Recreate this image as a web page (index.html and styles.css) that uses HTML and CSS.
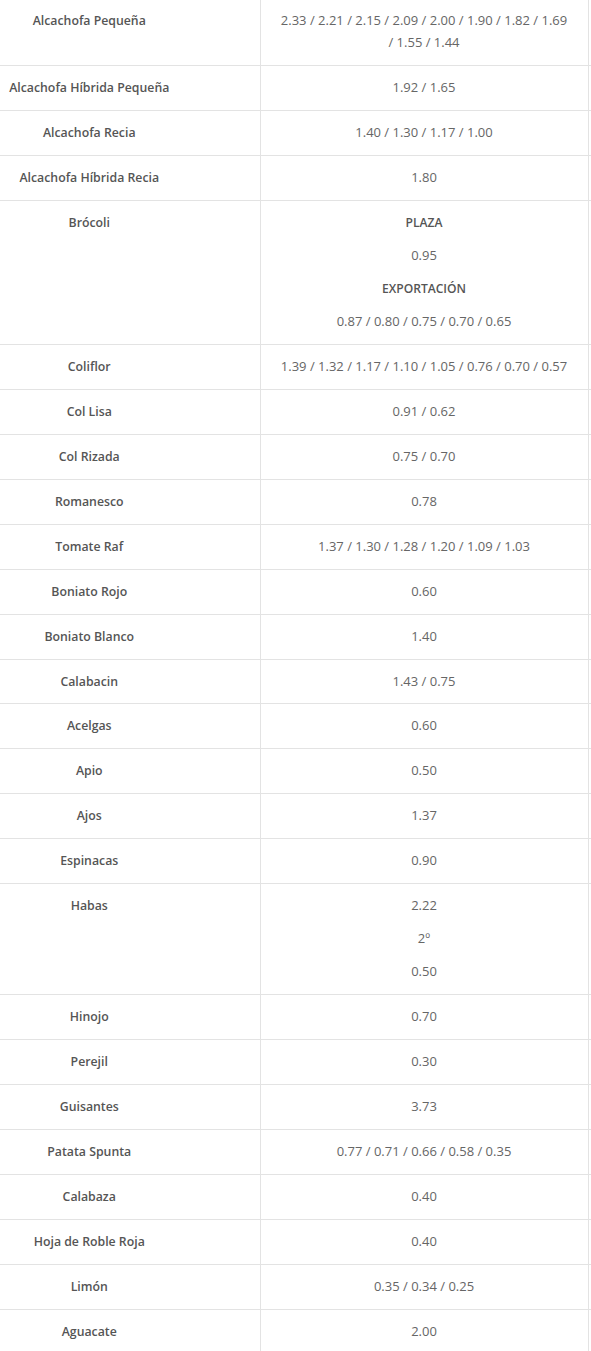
FILE: index.html
```html
<!DOCTYPE html>
<html lang="es">
<head>
<meta charset="utf-8">
<title>Precios</title>
<link rel="stylesheet" href="styles.css">
</head>
<body>
<table class="prices">
<colgroup><col class="c-name"><col class="c-val"><col class="c-extra"></colgroup>
<tbody>
<tr><td class="name">Alcachofa Pequeña</td><td class="val">2.33 / 2.21 / 2.15 / 2.09 / 2.00 / 1.90 / 1.82 / 1.69 / 1.55 / 1.44</td><td class="extra"></td></tr>
<tr><td class="name">Alcachofa Híbrida Pequeña</td><td class="val">1.92 / 1.65</td><td class="extra"></td></tr>
<tr><td class="name">Alcachofa Recia</td><td class="val">1.40 / 1.30 / 1.17 / 1.00</td><td class="extra"></td></tr>
<tr><td class="name">Alcachofa Híbrida Recia</td><td class="val">1.80</td><td class="extra"></td></tr>
<tr><td class="name">Brócoli</td><td class="val"><p class="label">PLAZA</p><p>0.95</p><p class="label">EXPORTACIÓN</p><p>0.87 / 0.80 / 0.75 / 0.70 / 0.65</p></td><td class="extra"></td></tr>
<tr><td class="name">Coliflor</td><td class="val">1.39 / 1.32 / 1.17 / 1.10 / 1.05 / 0.76 / 0.70 / 0.57</td><td class="extra"></td></tr>
<tr><td class="name">Col Lisa</td><td class="val">0.91 / 0.62</td><td class="extra"></td></tr>
<tr><td class="name">Col Rizada</td><td class="val">0.75 / 0.70</td><td class="extra"></td></tr>
<tr><td class="name">Romanesco</td><td class="val">0.78</td><td class="extra"></td></tr>
<tr><td class="name">Tomate Raf</td><td class="val">1.37 / 1.30 / 1.28 / 1.20 / 1.09 / 1.03</td><td class="extra"></td></tr>
<tr><td class="name">Boniato Rojo</td><td class="val">0.60</td><td class="extra"></td></tr>
<tr><td class="name">Boniato Blanco</td><td class="val">1.40</td><td class="extra"></td></tr>
<tr><td class="name">Calabacin</td><td class="val">1.43 / 0.75</td><td class="extra"></td></tr>
<tr><td class="name">Acelgas</td><td class="val">0.60</td><td class="extra"></td></tr>
<tr><td class="name">Apio</td><td class="val">0.50</td><td class="extra"></td></tr>
<tr><td class="name">Ajos</td><td class="val">1.37</td><td class="extra"></td></tr>
<tr><td class="name">Espinacas</td><td class="val">0.90</td><td class="extra"></td></tr>
<tr><td class="name">Habas</td><td class="val"><p>2.22</p><p>2º</p><p>0.50</p></td><td class="extra"></td></tr>
<tr><td class="name">Hinojo</td><td class="val">0.70</td><td class="extra"></td></tr>
<tr><td class="name">Perejil</td><td class="val">0.30</td><td class="extra"></td></tr>
<tr><td class="name">Guisantes</td><td class="val">3.73</td><td class="extra"></td></tr>
<tr><td class="name">Patata Spunta</td><td class="val">0.77 / 0.71 / 0.66 / 0.58 / 0.35</td><td class="extra"></td></tr>
<tr><td class="name">Calabaza</td><td class="val">0.40</td><td class="extra"></td></tr>
<tr><td class="name">Hoja de Roble Roja</td><td class="val">0.40</td><td class="extra"></td></tr>
<tr><td class="name">Limón</td><td class="val">0.35 / 0.34 / 0.25</td><td class="extra"></td></tr>
<tr><td class="name">Aguacate</td><td class="val">2.00</td><td class="extra"></td></tr>
</tbody>
</table>
</body>
</html>
```
FILE: styles.css
```css
html, body {
  margin: 0;
  padding: 0;
  background: #fff;
  overflow: hidden;
}
body {
  font-family: "Open Sans", "Liberation Sans", sans-serif;
  font-size: 13px;
  line-height: 21.965px;
  color: #666;
}
.prices {
  border-collapse: collapse;
  table-layout: fixed;
  width: 600px;
  margin-top: -2px;
}
.c-name { width: 260px; }
.c-val { width: 328px; }
.c-extra { width: 12px; }
.prices td {
  border: 1px solid #e3e3e3;
  vertical-align: top;
  text-align: center;
}
.prices td.name {
  border-left: none;
  padding: 11px 81px 11px 0;
  font-size: 12.3px;
  font-weight: 600;
  color: #555;
  white-space: nowrap;
}
.prices td.val {
  padding: 11px 19px;
}
.prices td.extra {
  padding: 0;
}
.val p {
  margin: 0 0 11px;
}
.val p:last-child {
  margin-bottom: 0;
}
.val .label {
  font-size: 12.1px;
  font-weight: 600;
  color: #555;
}
```
